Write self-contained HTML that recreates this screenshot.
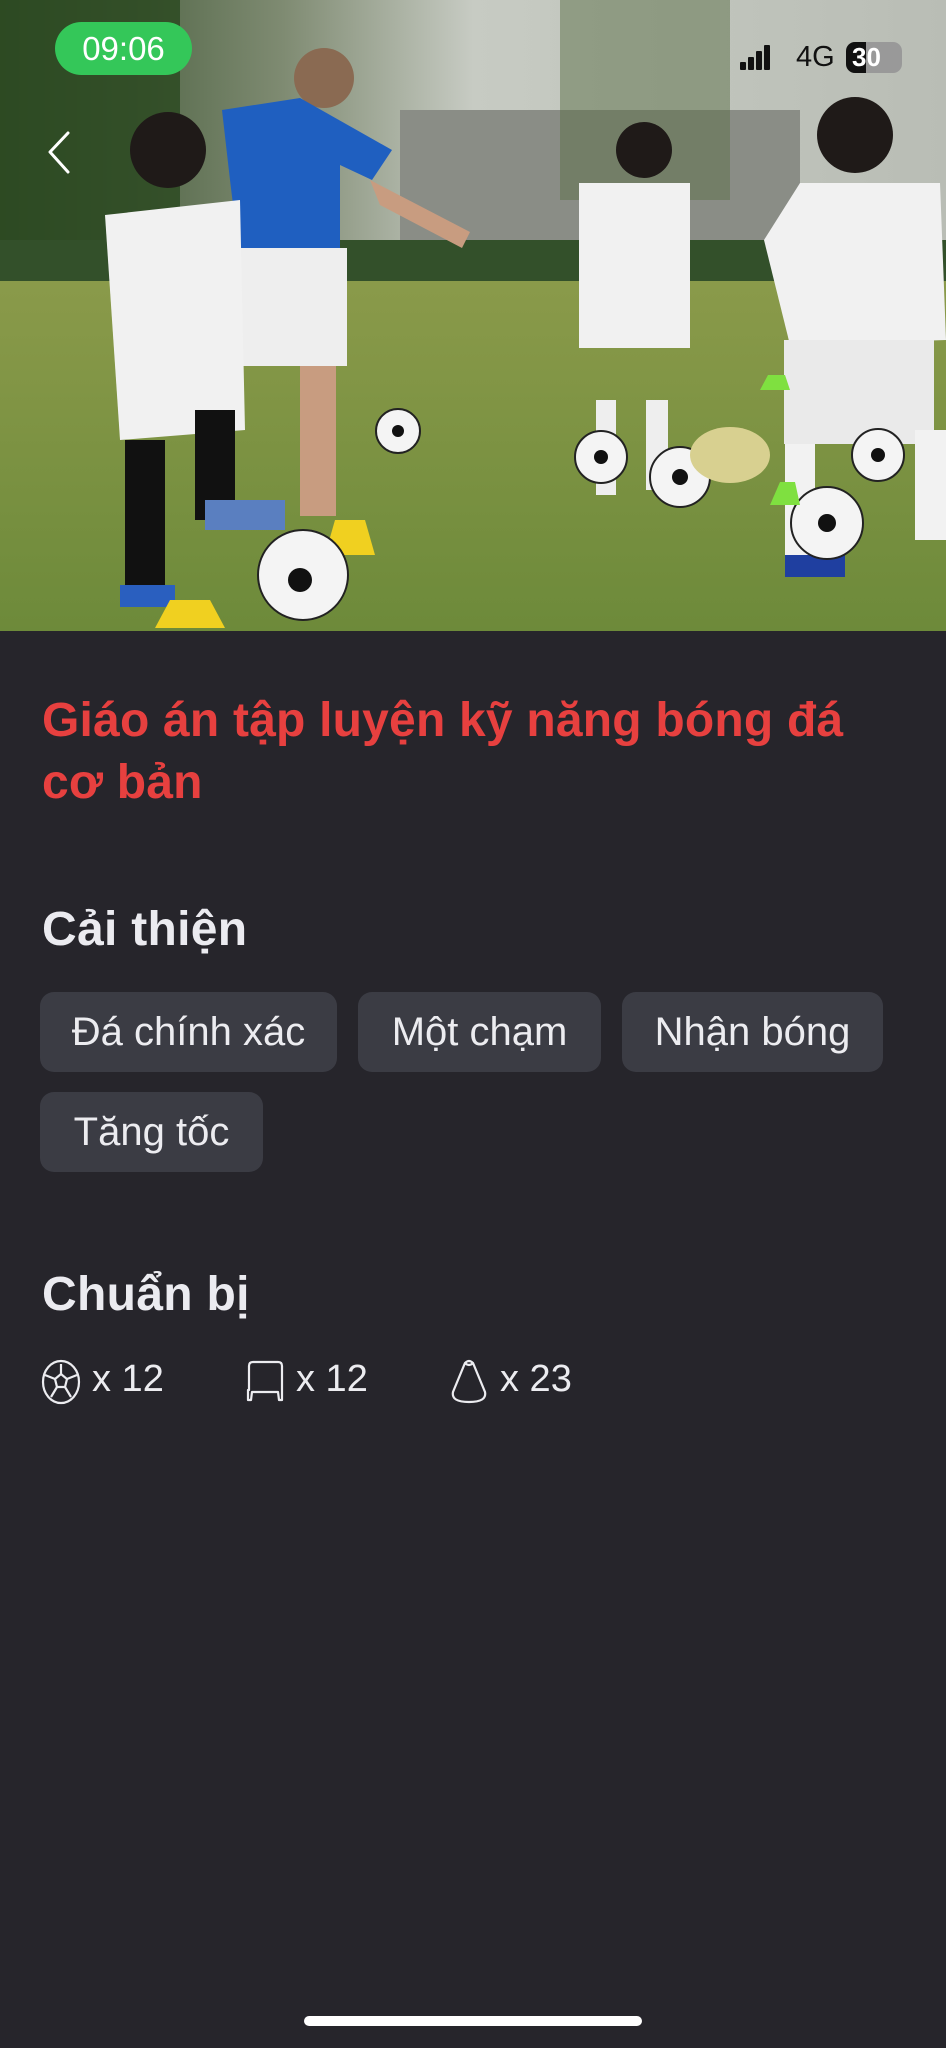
<!DOCTYPE html>
<html><head><meta charset="utf-8">
<style>
*{margin:0;padding:0;box-sizing:border-box}
body{width:946px;height:2048px;background:#26252b;position:relative;overflow:hidden;font-family:"Liberation Sans",sans-serif}
.abs{position:absolute}
.title{left:42px;top:690px;font-size:48px;font-weight:bold;color:#e7403f;line-height:62px;letter-spacing:0.2px;width:900px}
.h{left:42px;font-size:48px;font-weight:bold;color:#ebebf0;letter-spacing:0.3px;line-height:52px}
.chip{position:absolute;height:80px;background:#3b3c44;border-radius:14px;color:#ececf0;font-size:40px;line-height:80px;text-align:center}
.q{font-size:38px;color:#ececf0;line-height:44px}
</style></head><body>
<svg class="abs" style="left:0;top:0" width="946" height="631" viewBox="0 0 946 631">
<defs>
<linearGradient id="gr" x1="0" y1="0" x2="0" y2="1"><stop offset="0" stop-color="#8a9a4a"/><stop offset="1" stop-color="#6d8a3a"/></linearGradient>
<linearGradient id="bg" x1="0" y1="0" x2="1" y2="0"><stop offset="0" stop-color="#2f4a26"/><stop offset="0.3" stop-color="#7f8b72"/><stop offset="0.5" stop-color="#c7cbc3"/><stop offset="1" stop-color="#b9bdb5"/></linearGradient>
</defs>
<rect width="946" height="631" fill="url(#bg)"/>
<rect x="400" y="110" width="400" height="150" fill="#8a8d86"/>
<rect x="0" y="0" width="180" height="290" fill="#2d4a22" opacity="0.85"/>
<rect x="560" y="0" width="170" height="200" fill="#5c7048" opacity="0.5"/>
<rect x="0" y="240" width="946" height="50" fill="#33502a"/>
<rect x="0" y="281" width="946" height="350" fill="url(#gr)"/>
<circle cx="324" cy="78" r="30" fill="#8a6a52"/>
<path d="M222 110 L300 98 L392 150 L372 180 L340 165 L340 260 L240 262 L230 180Z" fill="#1f5fc0"/>
<path d="M370 180 L470 232 L462 248 L380 205Z" fill="#c89c80"/>
<rect x="235" y="248" width="112" height="118" fill="#eeeeee"/>
<rect x="300" y="366" width="36" height="150" fill="#c89c80"/>
<circle cx="168" cy="150" r="38" fill="#1f1a18"/>
<path d="M105 215 L240 200 L245 430 L120 440Z" fill="#f1f1f1"/>
<rect x="125" y="440" width="40" height="150" fill="#111"/>
<rect x="195" y="410" width="40" height="110" fill="#111"/>
<rect x="120" y="585" width="55" height="22" fill="#2a5fbf"/>
<rect x="205" y="500" width="80" height="30" fill="#5a7fc0"/>
<path d="M155 628 L170 600 L210 600 L225 628Z" fill="#f0d020"/>
<path d="M325 555 L335 520 L365 520 L375 555Z" fill="#f0d020"/>
<circle cx="644" cy="150" r="28" fill="#1f1a18"/>
<rect x="579" y="183" width="111" height="165" fill="#f1f1f1"/>
<rect x="596" y="400" width="20" height="95" fill="#eee"/>
<rect x="646" y="400" width="22" height="90" fill="#eee"/>
<circle cx="855" cy="135" r="38" fill="#1f1a18"/>
<path d="M764 240 L800 183 L940 183 L946 340 L790 345Z" fill="#f1f1f1"/>
<rect x="784" y="340" width="150" height="104" fill="#eaeaea"/>
<rect x="785" y="444" width="30" height="130" fill="#f2f2f2"/>
<rect x="915" y="430" width="31" height="110" fill="#f2f2f2"/>
<rect x="785" y="555" width="60" height="22" fill="#1f3fa0"/>
<g fill="#f4f4f4" stroke="#222" stroke-width="2">
<circle cx="303" cy="575" r="45"/><circle cx="398" cy="431" r="22"/><circle cx="680" cy="477" r="30"/>
<circle cx="601" cy="457" r="26"/><circle cx="878" cy="455" r="26"/><circle cx="827" cy="523" r="36"/>
</g>
<g fill="#111"><circle cx="300" cy="580" r="12"/><circle cx="398" cy="431" r="6"/><circle cx="680" cy="477" r="8"/><circle cx="601" cy="457" r="7"/><circle cx="878" cy="455" r="7"/><circle cx="827" cy="523" r="9"/></g>
<ellipse cx="730" cy="455" rx="40" ry="28" fill="#d8d090"/>
<path d="M760 390 L768 375 L785 375 L790 390Z" fill="#7fe040"/>
<path d="M770 505 L780 482 L795 482 L800 505Z" fill="#7fe040"/>
<path d="M68 133 L50 152 L68 172" fill="none" stroke="#fff" stroke-width="3" stroke-linecap="round" stroke-linejoin="round"/>
</svg>
<div class="abs" style="left:55px;top:22px;width:137px;height:53px;background:#34c759;border-radius:27px;color:#fff;font-size:33px;line-height:53px;text-align:center">09:06</div>
<div class="abs" style="left:740px;top:44px;width:28px;height:28px">
<div class="abs" style="left:0;top:18px;width:6px;height:8px;background:#111;border-radius:1px"></div>
<div class="abs" style="left:8px;top:13px;width:6px;height:13px;background:#111;border-radius:1px"></div>
<div class="abs" style="left:16px;top:7px;width:6px;height:19px;background:#111;border-radius:1px"></div>
<div class="abs" style="left:24px;top:1px;width:6px;height:25px;background:#111;border-radius:1px"></div>
</div>
<div class="abs" style="left:796px;top:40px;font-size:29px;color:#111;line-height:34px">4G</div>
<div class="abs" style="left:846px;top:42px;width:56px;height:31px;background:#999;border-radius:9px;overflow:hidden"><div style="width:20px;height:31px;background:#111"></div><div class="abs" style="left:6px;top:0;font-size:26px;line-height:31px;color:#fff;font-weight:bold">30</div></div>

<div class="abs title">Giáo án tập luyện kỹ năng bóng đá<br>cơ bản</div>
<div class="abs h" style="top:904px">Cải thiện</div>
<div class="chip" style="left:40px;top:992px;width:297px">Đá chính xác</div>
<div class="chip" style="left:358px;top:992px;width:243px">Một chạm</div>
<div class="chip" style="left:622px;top:992px;width:261px">Nhận bóng</div>
<div class="chip" style="left:40px;top:1092px;width:223px">Tăng tốc</div>
<div class="abs h" style="top:1269px">Chuẩn bị</div>

<svg class="abs" style="left:41px;top:1359px" width="40" height="46" viewBox="0 0 40 46" fill="none" stroke="#ececf0" stroke-width="2.2">
<ellipse cx="20" cy="23" rx="18" ry="21"/><path d="M14 20 L20 15 L26 20 L24 28 L16 28Z"/><path d="M20 15 V5 M26 20 L36 16 M24 28 L30 38 M16 28 L10 38 M14 20 L4 16"/>
</svg>
<div class="abs q" style="left:92px;top:1357px">x 12</div>
<svg class="abs" style="left:244px;top:1360px" width="42" height="44" viewBox="0 0 42 44" fill="none" stroke="#ececf0" stroke-width="2.2" stroke-linejoin="round">
<path d="M5 6 Q5 2 9 2 L34 2 Q38 2 38 6 L38 40 L35 40 L34 32 L8 32 L7 40 L4 40 L4 30 L5 30Z"/>
</svg>
<div class="abs q" style="left:296px;top:1357px">x 12</div>
<svg class="abs" style="left:449px;top:1358px" width="40" height="48" viewBox="0 0 40 48" fill="none" stroke="#ececf0" stroke-width="2.2">
<path d="M16 5 Q20 1 24 5 L36 34 Q38 44 20 44 Q2 44 4 34Z"/><path d="M16 5 Q20 9 24 5"/>
</svg>
<div class="abs q" style="left:500px;top:1357px">x 23</div>

<div class="abs" style="left:304px;top:2016px;width:338px;height:10px;background:#fff;border-radius:5px"></div>
</body></html>
